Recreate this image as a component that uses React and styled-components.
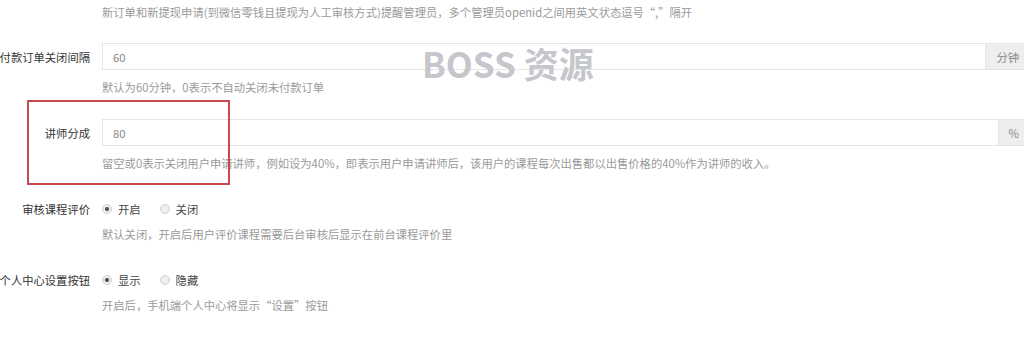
import React from "react";
import styled, { createGlobalStyle } from "styled-components";

const Global = createGlobalStyle`
  html, body { margin: 0; padding: 0; background: #fff; overflow: hidden; }
  body { font-family: "Noto Sans CJK SC", "Noto Sans", sans-serif; font-size: 11.3px; color: #333; }
`;

const Page = styled.div`
  position: relative;
  width: 1030px;
  height: 345px;
  padding-top: 2px;
  box-sizing: border-box;
`;

const Group = styled.div`
  display: flex;
  margin-bottom: ${(p) => p.$mb ?? 22}px;
`;

const Label = styled.div`
  flex: 0 0 90px;
  width: 90px;
  padding-right: 12px;
  height: ${(p) => (p.$empty ? 0 : 27)}px;
  display: flex;
  align-items: center;
  justify-content: flex-end;
  white-space: nowrap;
  color: #333;
  font-size: 11.3px;
`;

const Control = styled.div`
  flex: 1;
  min-width: 0;
  display: flex;
  flex-direction: column;
`;

const InputGroup = styled.div`
  display: flex;
  height: 27px;
`;

const Input = styled.div`
  flex: 1;
  border: 1px solid #e5e5e5;
  border-right: none;
  display: flex;
  align-items: center;
  padding-left: 10px;
  color: #888;
  font-size: 11.3px;
`;

const Addon = styled.div`
  display: flex;
  align-items: center;
  padding: 0 10px;
  background: #eeeeee;
  border: 1px solid #e5e5e5;
  color: #888;
  font-size: 11.3px;
`;

const Help = styled.div`
  margin-top: ${(p) => p.$mt}px;
  line-height: 20px;
  color: #9a9a9a;
  font-size: 11.3px;
  white-space: nowrap;
`;

const Radios = styled.div`
  height: 27px;
  display: flex;
  align-items: center;
  gap: 19px;
`;

const RadioItem = styled.label`
  display: flex;
  align-items: center;
  gap: 6px;
  color: #444;
  font-size: 11.3px;
`;

const Circle = styled.span`
  width: 8px;
  height: 8px;
  border-radius: 50%;
  border: 1px solid #cfcfcf;
  background: ${(p) =>
    p.$checked
      ? "radial-gradient(circle, #555 0 1.8px, #eeeeee 2.3px)"
      : "#efefef"};
  box-sizing: content-box;
`;

const Watermark = styled.div`
  position: absolute;
  left: 422px;
  top: 43px;
  font-family: "Noto Sans CJK SC", "Noto Sans", sans-serif;
  font-weight: 700;
  font-size: 35px;
  line-height: 40px;
  color: #c6c7cc;
  white-space: nowrap;
  pointer-events: none;
`;

const Annotation = styled.div`
  position: absolute;
  left: 27px;
  top: 100px;
  width: 199px;
  height: 81px;
  border: 2px solid #c94a4c;
  pointer-events: none;
`;

function Radio({ checked, children }) {
  return (
    <RadioItem>
      <Circle $checked={checked} />
      {children}
    </RadioItem>
  );
}

export default function App() {
  return (
    <>
      <Global />
      <Page>
        <Group $mb={21}>
          <Label $empty />
          <Control>
            <Help $mt={0}>
              新订单和新提现申请(到微信零钱且提现为人工审核方式)提醒管理员，多个管理员openid之间用英文状态逗号“,”隔开
            </Help>
          </Control>
        </Group>
        <Group>
          <Label>付款订单关闭间隔</Label>
          <Control>
            <InputGroup>
              <Input>60</Input>
              <Addon>分钟</Addon>
            </InputGroup>
            <Help $mt={7}>默认为60分钟，0表示不自动关闭未付款订单</Help>
          </Control>
        </Group>
        <Group>
          <Label>讲师分成</Label>
          <Control>
            <InputGroup>
              <Input>80</Input>
              <Addon>%</Addon>
            </InputGroup>
            <Help $mt={7}>
              留空或0表示关闭用户申请讲师，例如设为40%，即表示用户申请讲师后，该用户的课程每次出售都以出售价格的40%作为讲师的收入。
            </Help>
          </Control>
        </Group>
        <Group>
          <Label>审核课程评价</Label>
          <Control>
            <Radios>
              <Radio checked>开启</Radio>
              <Radio>关闭</Radio>
            </Radios>
            <Help $mt={2}>默认关闭，开启后用户评价课程需要后台审核后显示在前台课程评价里</Help>
          </Control>
        </Group>
        <Group>
          <Label>个人中心设置按钮</Label>
          <Control>
            <Radios>
              <Radio checked>显示</Radio>
              <Radio>隐藏</Radio>
            </Radios>
            <Help $mt={2}>开启后，手机端个人中心将显示“设置”按钮</Help>
          </Control>
        </Group>
        <Watermark>BOSS 资源</Watermark>
        <Annotation />
      </Page>
    </>
  );
}
